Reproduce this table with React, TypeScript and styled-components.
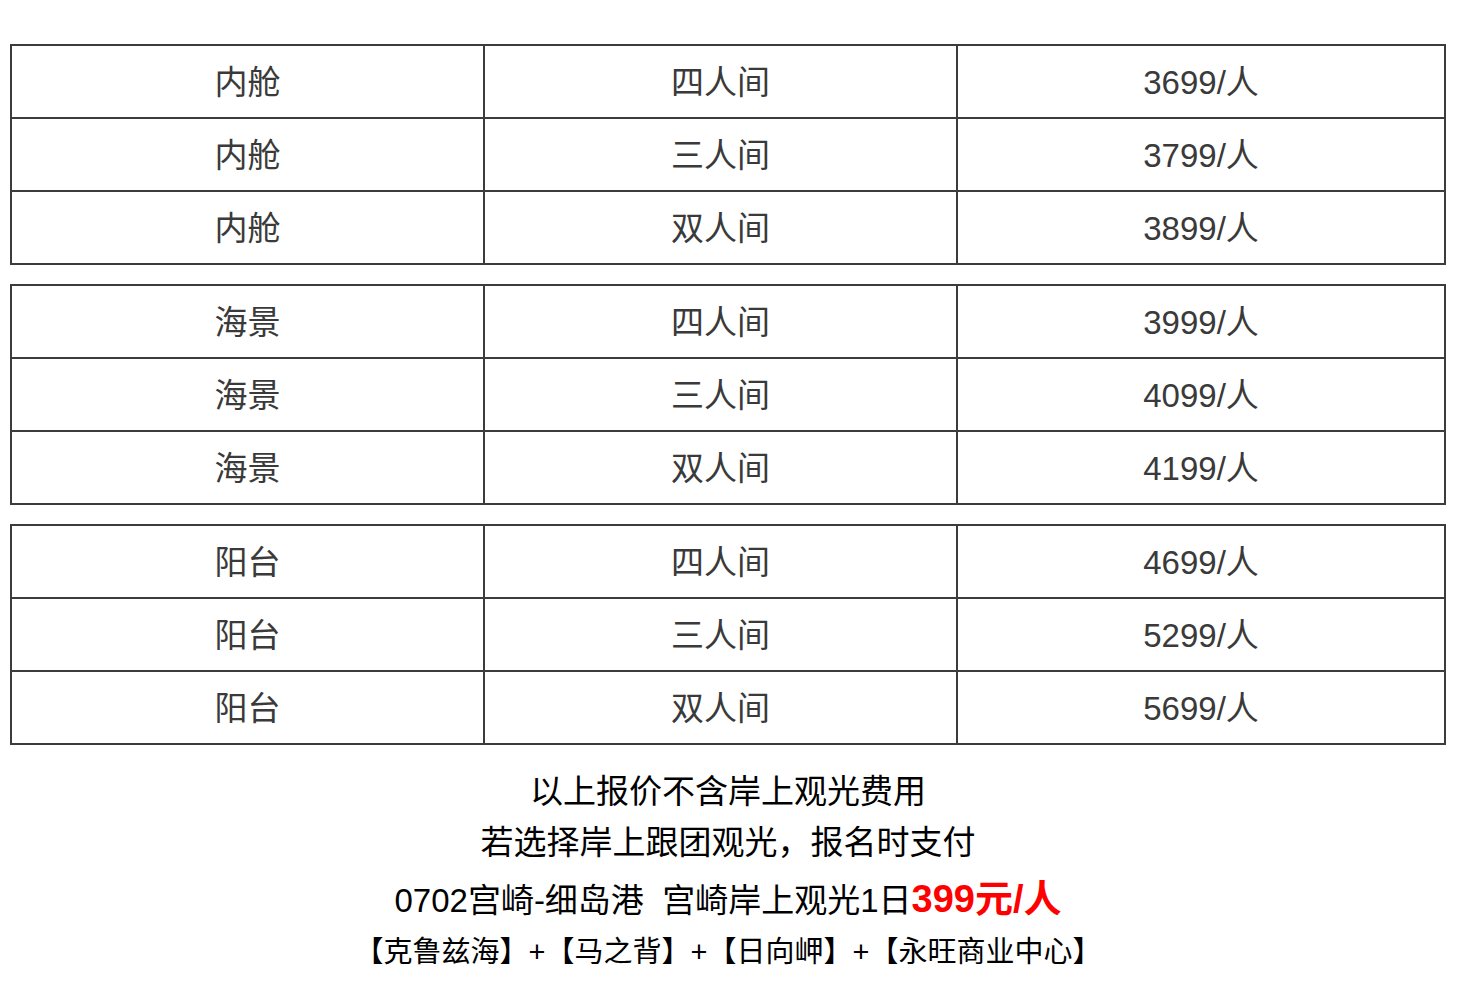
import styled, { createGlobalStyle } from "styled-components";

const GlobalStyle = createGlobalStyle`
  body {
    margin: 0;
    background: #fff;
    font-family: "Liberation Sans", "Noto Sans CJK SC", sans-serif;
  }
`;

const groups = [
    { cabin: "内舱", prices: ["3699", "3799", "3899"] },
    { cabin: "海景", prices: ["3999", "4099", "4199"] },
    { cabin: "阳台", prices: ["4699", "5299", "5699"] },
];

const rooms = ["四人间", "三人间", "双人间"];

export default function App() {
    return (
        <Page>
            <GlobalStyle />
            <Tables>
                {groups.map((g) => (
                    <Table key={g.cabin}>
                        {rooms.map((room, i) => (
                            <Row key={room} $first={i === 0}>
                                <Cell $first>{g.cabin}</Cell>
                                <Cell>{room}</Cell>
                                <Cell>{g.prices[i]}/人</Cell>
                            </Row>
                        ))}
                    </Table>
                ))}
            </Tables>
            <Notes>
                <Line $h={50} $size={33}>以上报价不含岸上观光费用</Line>
                <Line $h={52} $size={33}>若选择岸上跟团观光，报名时支付</Line>
                <Line $h={60} $size={33}>
                    0702宫崎-细岛港&nbsp;&nbsp;宫崎岸上观光1日<Price>399元/人</Price>
                </Line>
                <Line $h={46} $size={29}>【克鲁兹海】+【马之背】+【日向岬】+【永旺商业中心】</Line>
            </Notes>
        </Page>
    );
}

const Page = styled.div`
    width: 1436px;
    padding: 44px 0 0 10px;
`;

const Tables = styled.div`
    display: flex;
    flex-direction: column;
    gap: 19px;
`;

const Table = styled.div`
    border: 2px solid #3c3c3c;
`;

const Row = styled.div<{ $first?: boolean }>`
    display: grid;
    grid-template-columns: 471px 473px 488px;
    height: 71px;
    border-top: ${(p) => (p.$first ? "none" : "2px solid #3c3c3c")};
`;

const Cell = styled.div<{ $first?: boolean }>`
    display: flex;
    align-items: center;
    justify-content: center;
    padding-bottom: 4px;
    border-left: ${(p) => (p.$first ? "none" : "2px solid #3c3c3c")};
    color: #3a3a3a;
    font-size: 33px;
`;

const Notes = styled.div`
    padding-top: 22px;
    display: flex;
    flex-direction: column;
    align-items: center;
    color: #000;
`;

const Line = styled.div<{ $h: number; $size: number }>`
    height: ${(p) => p.$h}px;
    line-height: ${(p) => p.$h}px;
    font-size: ${(p) => p.$size}px;
    white-space: nowrap;
`;

const Price = styled.span`
    color: #ff0000;
    font-weight: 700;
    font-size: 38px;
`;
